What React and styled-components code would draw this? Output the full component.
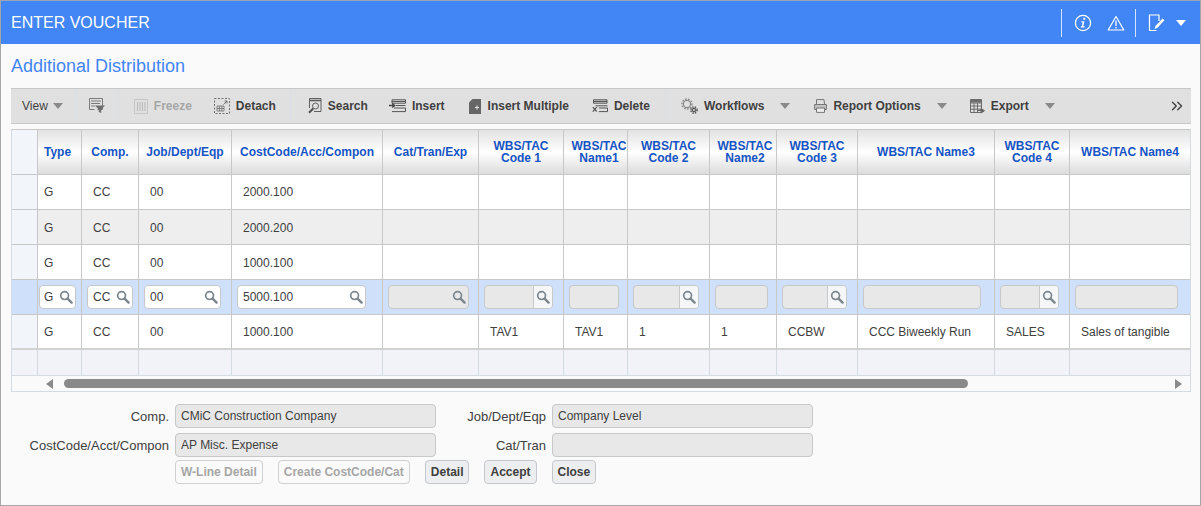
import React from "react";
import styled, { createGlobalStyle } from "styled-components";
import { ChevronsRight } from "lucide-react";

const GlobalStyle = createGlobalStyle`
  html, body {
    margin: 0;
    padding: 0;
    background: #fafafa;
    font-family: "Liberation Sans", Arial, sans-serif;
  }
  * {
    box-sizing: border-box;
  }
`;

const Frame = styled.div`
  width: 1201px;
  height: 506px;
  border: 1px solid #a6a6a6;
  border-top-color: #9aa5b5;
  background: #fafafa;
  overflow: hidden;
`;

const TitleBar = styled.header`
  height: 43px;
  display: flex;
  align-items: center;
  justify-content: space-between;
  padding: 0 0 0 10px;
  background: #4285f4;
  color: #fff;
`;

const Title = styled.h1`
  margin: 0;
  font-size: 16px;
  font-weight: 400;
`;

const TitleActions = styled.div`
  display: flex;
  align-items: center;
  height: 100%;
  padding-right: 14px;
`;

const TitleDivider = styled.span`
  width: 1px;
  height: 28px;
  margin: 0 12px 0 0;
  background: #d5e4fc;
`;

const TitleIcon = styled.span`
  display: inline-flex;
  margin-right: ${(p) => p.$gap}px;
`;

const SubTitle = styled.h2`
  margin: 0;
  height: 44px;
  padding: 11px 0 0 10px;
  color: #4285f4;
  font-size: 18px;
  font-weight: 400;
  line-height: 22px;
`;

const Toolbar = styled.div`
  display: flex;
  align-items: center;
  height: 36px;
  margin: 0 9px 0 10px;
  padding-left: 11px;
  background: #e0e0e0;
  border-top: 1px solid #c8c8c8;
  border-bottom: 1px solid #c8c8c8;
`;

const ToolGroup = styled.div`
  display: flex;
  align-items: center;
  gap: ${(p) => p.$gap || 22}px;
`;

const ToolSeparator = styled.span`
  flex: none;
  width: 1px;
  height: 34px;
  margin: ${(p) => p.$margin || "0 15px"};
  background: #d8dfe6;
`;

const ToolButton = styled.span`
  display: inline-flex;
  align-items: center;
  gap: 6px;
  margin-left: ${(p) => p.$nudge || 0}px;
  color: ${(p) => (p.$disabled ? "#a6a6a6" : "#404040")};
  font-size: 12px;
  font-weight: ${(p) => (p.$plain ? 400 : 700)};
  white-space: nowrap;
`;

const MenuArrow = styled.span`
  width: 0;
  height: 0;
  margin-left: ${(p) => p.$offset}px;
  border-left: 5px solid transparent;
  border-right: 5px solid transparent;
  border-top: 6px solid #8a8a8a;
`;

const Overflow = styled.span`
  display: inline-flex;
  margin-left: auto;
  padding-right: 5px;
  color: #404040;
`;

const Grid = styled.div`
  margin: 5px 9px 0 10px;
  border: 1px solid #d4dbe2;
  border-top-color: #c8c8c8;
  background: #fafafa;
`;

const Row = styled.div`
  display: grid;
  grid-template-columns: ${(p) => p.$columns};
  height: ${(p) => p.$height}px;
`;

const HeadCell = styled.div`
  display: flex;
  align-items: center;
  justify-content: center;
  padding: 0 ${(p) => p.$padRight ?? 2}px 0 ${(p) => p.$padLeft ?? 2}px;
  border-right: 1px solid #c8c8c8;
  border-bottom: 1px solid #c8c8c8;
  background: linear-gradient(#e2e2e2, #ffffff 50%, #dcdcdc);
  color: #1554c4;
  font-size: 12px;
  font-weight: 700;
  line-height: 12px;
  text-align: center;
  white-space: pre-line;
  &:last-child {
    border-right: 0;
  }
`;

const CornerCell = styled.div`
  border-right: 1px solid #c8c8c8;
  border-bottom: ${(p) => (p.$last ? "2px solid #d2d2d2" : "1px solid #c8c8c8")};
  background: ${(p) => (p.$edit ? "#cfe0fa" : "#f2f5fa")};
`;

const rowColors = {
  white: "#ffffff",
  gray: "#eeeeee",
  edit: "#cfe0fa",
};

const Cell = styled.div`
  display: flex;
  align-items: center;
  padding-left: ${(p) => p.$pad}px;
  padding-top: ${(p) => p.$drop || 0}px;
  border-right: 1px solid #c8c8c8;
  border-bottom: ${(p) => (p.$last ? "2px solid #d2d2d2" : "1px solid #c8c8c8")};
  background: ${(p) => rowColors[p.$tone]};
  color: #404040;
  font-size: 12px;
  white-space: nowrap;
  &:last-child {
    border-right: 0;
  }
`;

const EditCell = styled.div`
  display: flex;
  align-items: center;
  padding: 0 ${(p) => p.$right}px 0 ${(p) => p.$left}px;
  border-right: 1px solid #c8c8c8;
  border-bottom: 1px solid #c8c8c8;
  background: ${rowColors.edit};
  &:last-child {
    border-right: 0;
  }
`;

const EditBox = styled.div`
  position: relative;
  display: flex;
  align-items: center;
  width: 100%;
  height: 24px;
  padding-left: ${(p) => p.$inset}px;
  border: 1px solid #c8c8c8;
  border-radius: 4px;
  background: ${(p) => (p.$disabled ? "#e8e8e8" : "#ffffff")};
  color: #404040;
  font-size: 12px;
  overflow: hidden;
`;

const LookupButton = styled.span`
  position: absolute;
  top: 0;
  right: 0;
  bottom: 0;
  display: flex;
  align-items: center;
  justify-content: center;
  width: ${(p) => (p.$split ? 19 : 18)}px;
  border-left: ${(p) => (p.$split ? "1px solid #c8c8c8" : "0")};
  background: ${(p) => (p.$split ? "#f4f6f8" : "transparent")};
`;

const FillerCell = styled.div`
  border-right: 1px solid #d4dbe2;
  border-bottom: 1px solid #d4dbe2;
  background: #f1f3f8;
  &:last-child {
    border-right: 0;
  }
`;

const ScrollRow = styled.div`
  display: flex;
  align-items: center;
  height: 15px;
  padding: 0 8px 0 34px;
`;

const ScrollArrow = styled.span`
  flex: none;
  width: 0;
  height: 0;
  border-top: 5px solid transparent;
  border-bottom: 5px solid transparent;
  ${(p) => (p.$right ? "border-left: 7px solid #8a8a8a;" : "border-right: 7px solid #8a8a8a;")}
`;

const ScrollTrack = styled.div`
  flex: 1;
  padding: 0 207px 0 11px;
`;

const ScrollThumb = styled.div`
  height: 9px;
  border-radius: 5px;
  background: #8a8a8a;
`;

const Form = styled.div`
  display: grid;
  grid-template-columns: 168px 261px 104px 261px;
  grid-auto-rows: 24px;
  column-gap: 6px;
  row-gap: 5px;
  padding-top: 12px;
  align-items: center;
`;

const FormLabel = styled.label`
  color: #404040;
  font-size: 13px;
  text-align: right;
  white-space: nowrap;
`;

const FormValue = styled.div`
  display: flex;
  align-items: center;
  height: 24px;
  padding-left: 5px;
  border: 1px solid #c8c8c8;
  border-radius: 4px;
  background: #e8e8e8;
  color: #404040;
  font-size: 12px;
`;

const FormButtons = styled.div`
  grid-column: 2 / 5;
  align-self: start;
  display: flex;
  gap: 15px;
  margin-top: -2px;
`;

const FormButton = styled.button`
  height: 24px;
  padding: 0 5px;
  border: 1px solid ${(p) => (p.disabled ? "#d0d0d0" : "#c4c8cc")};
  border-radius: 4px;
  background: ${(p) => (p.disabled ? "#fafafa" : "#eceeef")};
  color: ${(p) => (p.disabled ? "#a6a6a6" : "#404040")};
  font-family: inherit;
  font-size: 12px;
  font-weight: 700;
`;

const Svg = ({ w = 16, h = 16, children, ...rest }) => (
  <svg width={w} height={h} viewBox={`0 0 ${w} ${h}`} fill="none" {...rest}>
    {children}
  </svg>
);

const SearchGlyph = () => (
  <Svg w={14} h={14}>
    <circle cx="5.6" cy="5.6" r="3.9" stroke="#7c868c" strokeWidth="1.7" />
    <path d="M8.6 8.6L12.6 12.6" stroke="#7c868c" strokeWidth="2.4" strokeLinecap="round" />
  </Svg>
);

const InfoIcon = () => (
  <Svg w={18} h={18}>
    <circle cx="9" cy="9" r="7.6" stroke="#fff" strokeWidth="1.3" />
    <path d="M9.3 3.8h2v2h-2z" fill="#fff" />
    <path d="M7.2 7.2h3.2l-1.1 5h1.2v1.2H6.7l.3-1.2h.8l.8-3.8h-1z" fill="#fff" />
  </Svg>
);

const WarningIcon = () => (
  <Svg w={18} h={16}>
    <path d="M9 1.5L16.8 15H1.2z" stroke="#fff" strokeWidth="1.2" strokeLinejoin="round" />
    <path d="M9 5.5v5.5M9 12v1.5" stroke="#fff" strokeWidth="1.3" />
  </Svg>
);

const NoteIcon = () => (
  <Svg w={17} h={18}>
    <path d="M11 7V1H1.5v15.5h7" stroke="#fff" strokeWidth="1.2" />
    <path d="M6.5 15l1-3 7-7.5 2 1.8-7 7.5z" fill="#fff" />
  </Svg>
);

const WhiteCaret = styled.span`
  width: 0;
  height: 0;
  border-left: 5px solid transparent;
  border-right: 5px solid transparent;
  border-top: 6px solid #fff;
`;

const FilterIcon = () => (
  <Svg w={17} h={16}>
    <path d="M.5.5h13v11h-5M.5.5v11h5" stroke="#7a7a7a" />
    <path d="M2 3h10M2 5.5h9M2 8h4" stroke="#7a7a7a" />
    <path d="M6 7.5h10l-3.8 4v3.5l-2.4-1v-2.5z" fill="#6e6e6e" />
  </Svg>
);

const FreezeIcon = () => (
  <Svg w={14} h={15}>
    <rect x=".5" y=".5" width="13" height="14" stroke="#c6c6c6" />
    <path d="M3.5 3v9M6 3v9M8.5 3v9M11 3v9" stroke="#bcbcbc" strokeWidth="1.2" />
  </Svg>
);

const DetachIcon = () => (
  <Svg w={16} h={16}>
    <rect x=".5" y=".5" width="15" height="15" stroke="#707070" strokeDasharray="2 1.5" />
    <path d="M3 8h7v5H3zM3 10.5h7M5.4 8v5M7.8 8v5" stroke="#707070" strokeWidth=".8" />
    <path d="M9.5 6.5l3.5-3.5M10.5 3H13v2.5" stroke="#707070" />
  </Svg>
);

const FindIcon = () => (
  <Svg w={14} h={16}>
    <path d="M1.5 10V.5h11.5v13H6" stroke="#606060" />
    <path d="M1.5 2.5h11.5" stroke="#606060" strokeWidth="1.6" />
    <circle cx="7.5" cy="8" r="3" stroke="#606060" />
    <path d="M5.2 10.5L1 14.8" stroke="#505050" strokeWidth="2" />
  </Svg>
);

const InsertIcon = () => (
  <Svg w={17} h={14}>
    <path d="M3 .8h13.5v3.4H3zM5 9h11.5v3.6H3" stroke="#555" />
    <path d="M3 2.5h13M7 6.5h9.5" stroke="#555" strokeWidth="1.2" />
    <path d="M0 6.5h4.5M3.2 4.5l2.4 2-2.4 2" stroke="#444" strokeWidth="1.5" />
  </Svg>
);

const InsertManyIcon = () => (
  <Svg w={13} h={15}>
    <path d="M3.5 0H12v15H0V3.5z" fill="#666" />
    <path d="M6 8.5h4M8 6.5v4" stroke="#e0e0e0" strokeWidth="1.2" />
  </Svg>
);

const DeleteIcon = () => (
  <Svg w={16} h={14}>
    <path d="M1.5.8h13.5v3.4H1.5zM7 9h8.5v3.6H7M3.5 6.8h12" stroke="#555" />
    <path d="M1.5 2.5H15" stroke="#555" strokeWidth="1.2" />
    <path d="M.8 8.2l4 4.4M4.8 8.2l-4 4.4" stroke="#555" strokeWidth="1.2" />
  </Svg>
);

const GearsIcon = () => (
  <Svg w={17} h={16}>
    <circle cx="6" cy="6" r="3.6" stroke="#8a8a8a" strokeWidth="1.2" />
    <circle cx="6" cy="6" r="5" stroke="#8a8a8a" strokeDasharray="1.6 1.4" strokeWidth="1.4" />
    <circle cx="13" cy="12" r="1.6" stroke="#555" strokeWidth="1.2" />
    <circle cx="13" cy="12" r="3.1" stroke="#555" strokeDasharray="1.3 1.2" strokeWidth="1.6" />
  </Svg>
);

const PrinterIcon = () => (
  <Svg w={13} h={14}>
    <path d="M2.5 5V.6h7.5L10.5 5" stroke="#777" />
    <path d="M.6 5.5h11.8v5H.6z" stroke="#777" fill="#c2c2c2" />
    <path d="M2.5 9h8v4.4h-8z" stroke="#777" fill="#eee" />
  </Svg>
);

const ExportIcon = () => (
  <Svg w={15} h={15}>
    <path d="M.5.5h11v13H.5zM.5 4h11M.5 7h11M.5 10.2h11M4 4v9.5M7.5 4v9.5" stroke="#6c6c6c" />
    <path d="M.5.5h11v3H.5z" fill="#6c6c6c" />
    <path d="M8 11.5h4M11 9.5l3.5 2.2L11 14z" fill="#666" stroke="#666" />
  </Svg>
);

const columns = [
  { head: "Type", width: 44, pad: 6, left: 1, right: 5, inset: 4, headRight: 6 },
  { head: "Comp.", width: 57, pad: 11, left: 5, right: 5, inset: 5 },
  { head: "Job/Dept/Eqp", width: 93, pad: 11, left: 5, right: 10, inset: 5 },
  { head: "CostCode/Acc/Compon", width: 151, pad: 11, left: 5, right: 16, inset: 5 },
  { head: "Cat/Tran/Exp", width: 96, pad: 11, left: 5, right: 9, inset: 5 },
  { head: "WBS/TAC\nCode 1", width: 85, pad: 11, left: 5, right: 10, inset: 5, split: true },
  { head: "WBS/TAC\nName1", width: 64, pad: 11, left: 5, right: 8, inset: 5, plain: true, headLeft: 7, headRight: 0 },
  { head: "WBS/TAC\nCode 2", width: 82, pad: 11, left: 5, right: 10, inset: 5, split: true },
  { head: "WBS/TAC\nName2", width: 67, pad: 11, left: 5, right: 8, inset: 5, plain: true, headLeft: 5, headRight: 1 },
  { head: "WBS/TAC\nCode 3", width: 81, pad: 11, left: 5, right: 10, inset: 5, split: true },
  { head: "WBS/TAC Name3", width: 137, pad: 11, left: 5, right: 13, inset: 5, plain: true },
  { head: "WBS/TAC\nCode 4", width: 75, pad: 11, left: 5, right: 10, inset: 5, split: true },
  { head: "WBS/TAC Name4", width: 120, pad: 11, left: 5, right: 12, inset: 5, plain: true },
];

const template = ["26px", ...columns.map((c) => `${c.width}px`)].join(" ");

const baseRow = (cost) => ["G", "CC", "00", cost];

const rows = [
  { tone: "white", drop: 0, values: baseRow("2000.100") },
  { tone: "gray", drop: 2, values: baseRow("2000.200") },
  { tone: "white", drop: 2, values: baseRow("1000.100") },
];

const lastRow = [
  ...baseRow("1000.100"),
  "",
  "TAV1",
  "TAV1",
  "1",
  "1",
  "CCBW",
  "CCC Biweekly Run",
  "SALES",
  "Sales of tangible",
];

const editValues = ["G", "CC", "00", "5000.100"];

export default function App() {
  return (
    <>
      <GlobalStyle />
      <Frame>
        <TitleBar>
          <Title>ENTER VOUCHER</Title>
          <TitleActions>
            <TitleDivider />
            <TitleIcon $gap={15}>
              <InfoIcon />
            </TitleIcon>
            <TitleIcon $gap={10}>
              <WarningIcon />
            </TitleIcon>
            <TitleDivider />
            <TitleIcon $gap={11}>
              <NoteIcon />
            </TitleIcon>
            <WhiteCaret />
          </TitleActions>
        </TitleBar>

        <SubTitle>Additional Distribution</SubTitle>

        <Toolbar>
          <ToolButton $plain>
            View
            <MenuArrow $offset={-1} />
          </ToolButton>
          <ToolSeparator $margin="0 12px 0 13px" />
          <FilterIcon />
          <ToolSeparator $margin="0 15px 0 12px" />
          <ToolGroup>
            <ToolButton $disabled>
              <FreezeIcon />
              Freeze
            </ToolButton>
            <ToolButton>
              <DetachIcon />
              Detach
            </ToolButton>
          </ToolGroup>
          <ToolSeparator $margin="0 17px 0 14px" />
          <ToolGroup $gap={23}>
            <ToolButton>
              <FindIcon />
              Search
            </ToolButton>
            <ToolButton $nudge={-2}>
              <InsertIcon />
              Insert
            </ToolButton>
            <ToolButton $nudge={1}>
              <InsertManyIcon />
              Insert Multiple
            </ToolButton>
            <ToolButton>
              <DeleteIcon />
              Delete
            </ToolButton>
          </ToolGroup>
          <ToolSeparator $margin="0 15px 0 15px" />
          <ToolGroup $gap={23}>
            <ToolButton>
              <GearsIcon />
              Workflows
              <MenuArrow $offset={10} />
            </ToolButton>
            <ToolButton $nudge={1}>
              <PrinterIcon />
              Report Options
              <MenuArrow $offset={10} />
            </ToolButton>
            <ToolButton>
              <ExportIcon />
              Export
              <MenuArrow $offset={10} />
            </ToolButton>
          </ToolGroup>
          <Overflow>
            <ChevronsRight size={18} strokeWidth={1.8} />
          </Overflow>
        </Toolbar>

        <Grid>
          <Row $columns={template} $height={45}>
            <CornerCell />
            {columns.map((c) => (
              <HeadCell key={c.head} $padLeft={c.headLeft} $padRight={c.headRight}>
                {c.head}
              </HeadCell>
            ))}
          </Row>

          {rows.map((row, i) => (
            <Row key={i} $columns={template} $height={35}>
              <CornerCell />
              {columns.map((c, j) => (
                <Cell key={c.head} $pad={c.pad} $tone={row.tone} $drop={row.drop}>
                  {row.values[j]}
                </Cell>
              ))}
            </Row>
          ))}

          <Row $columns={template} $height={35}>
            <CornerCell $edit />
            {columns.map((c, j) => (
              <EditCell key={c.head} $left={c.left} $right={c.right}>
                <EditBox $disabled={j > 3} $inset={c.inset}>
                  {editValues[j]}
                  {!c.plain && (
                    <LookupButton $split={c.split}>
                      <SearchGlyph />
                    </LookupButton>
                  )}
                </EditBox>
              </EditCell>
            ))}
          </Row>

          <Row $columns={template} $height={35}>
            <CornerCell $last />
            {columns.map((c, j) => (
              <Cell key={c.head} $pad={c.pad} $tone="white" $last>
                {lastRow[j]}
              </Cell>
            ))}
          </Row>

          <Row $columns={template} $height={26}>
            <FillerCell />
            {columns.map((c) => (
              <FillerCell key={c.head} />
            ))}
          </Row>

          <ScrollRow>
            <ScrollArrow />
            <ScrollTrack>
              <ScrollThumb />
            </ScrollTrack>
            <ScrollArrow $right />
          </ScrollRow>
        </Grid>

        <Form>
          <FormLabel>Comp.</FormLabel>
          <FormValue>CMiC Construction Company</FormValue>
          <FormLabel>Job/Dept/Eqp</FormLabel>
          <FormValue>Company Level</FormValue>
          <FormLabel>CostCode/Acct/Compon</FormLabel>
          <FormValue>AP Misc. Expense</FormValue>
          <FormLabel>Cat/Tran</FormLabel>
          <FormValue />
          <FormButtons>
            <FormButton disabled>W-Line Detail</FormButton>
            <FormButton disabled>Create CostCode/Cat</FormButton>
            <FormButton>Detail</FormButton>
            <FormButton>Accept</FormButton>
            <FormButton>Close</FormButton>
          </FormButtons>
        </Form>
      </Frame>
    </>
  );
}
